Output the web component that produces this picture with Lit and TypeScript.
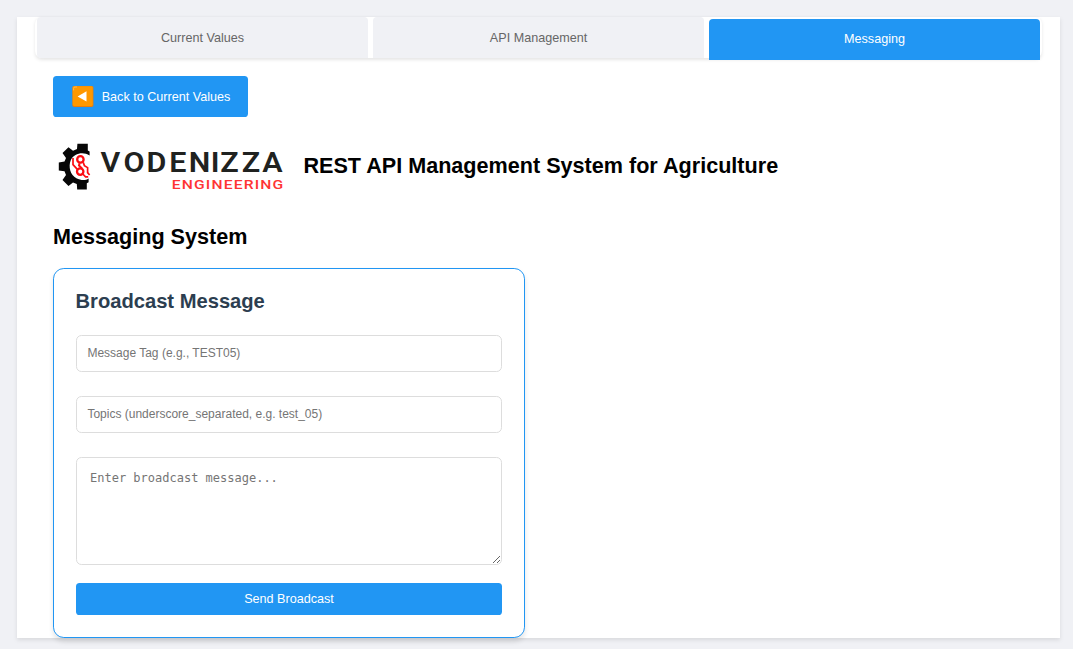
import { LitElement, html, css } from "lit";
import { customElement, state } from "lit/decorators.js";

@customElement("vodenizza-logo")
class VodenizzaLogo extends LitElement {
  static styles = css`
    :host { display: block; width: 234px; height: 62px; }
    svg { display: block; }
    .name { font: 600 28.2px Roboto, "Liberation Sans", sans-serif; text-anchor: middle; fill: #202220; }
    .sub { font: 500 13.7px Roboto, "Liberation Sans", sans-serif; letter-spacing: 1px; fill: #ff3434; }
  `;
  render() {
    return html`<svg width="234" height="62" viewBox="53 135 234 62">
      <path fill="#070707" d="M77.4 143.8 H87.8 V150.6 L89.6 151.6 V155.4 C83 151.2 74 153.4 70.8 160 C68 167 70.4 175 76.4 178.2 C81 180.6 86 180.4 88.6 178.4 V182.2 L86.8 183.3 V189.4 H77.2 L76.8 184 L73 182.5 L68.5 186 L62.5 180 L66 175 L64.5 171.2 L58.8 170.5 V162.5 L64.5 161.5 L66 158 L62.5 153 L68.5 147.3 L73 150.7 L77 149 Z"/>
      <g fill="none" stroke="#fb0d12" stroke-width="1.7">
        <path d="M73 158 V164.6 L77.4 169.4"/>
        <path d="M83.2 162.2 L84.4 165.6 L87.6 167.6 V172.6 L89.6 175"/>
        <path d="M82.8 174 L85.6 176.8 H88.2"/>
        <path d="M79.6 163.3 L79 165.4 L82 168.5" stroke-width="2"/>
        <circle cx="80.4" cy="159.4" r="3.2" stroke-width="2.3"/>
        <circle cx="80.2" cy="171.6" r="3.2" stroke-width="2.3"/>
      </g>
      <text class="name" transform="scale(1.08 1)" y="172.4" x="102.3 124.1 144.9 164.6 184.7 199.1 212.5 232.4 252.3">VODENIZZA</text>
      <text class="sub" x="171.8" y="189" textLength="112.5" lengthAdjust="spacingAndGlyphs">ENGINEERING</text>
    </svg>`;
  }
}

@customElement("app-root")
class AppRoot extends LitElement {
  @state() private active = 2;
  private tabs = ["Current Values", "API Management", "Messaging"];

  static styles = css`
    :host {
      display: block;
      box-sizing: border-box;
      min-height: 100vh;
      padding: 17px 13px 11px 17px;
      background: #f0f1f5;
      font-family: "Liberation Sans", Arial, sans-serif;
      color: #000;
    }
    * { box-sizing: border-box; }
    .container {
      height: 621px;
      padding: 0 18px;
      background: #fff;
      box-shadow: 0 1.8px 4.5px rgba(0, 0, 0, 0.1);
    }
    .tabs {
      display: flex;
      gap: 5px;
      padding: 0 2px;
      height: 41px;
      border-radius: 7px;
      box-shadow: 0 1.8px 3.6px rgba(0, 0, 0, 0.1);
    }
    button { border: 0; font: 12.6px "Liberation Sans", Arial, sans-serif; }
    .tab {
      flex: 1;
      padding: 0;
      border-radius: 4px 4px 0 0;
      background: #f0f1f5;
      color: #666;
    }
    .tab:first-child { border-bottom-left-radius: 4px; }
    .tab.active { padding-bottom: 2px; background: #2196f3; color: #fff; transform: translateY(2px); }
    .page { padding: 18px 18px 0; }
    .back {
      display: flex;
      align-items: center;
      gap: 7.7px;
      width: 195px;
      height: 41px;
      padding: 0 0 0 19px;
      border-radius: 3.6px;
      background: #2196f3;
      color: #fff;
    }
    .back svg { margin-top: -1px; }
    .brand { display: flex; align-items: center; gap: 16.4px; margin-top: 18px; height: 62px; }
    h1, h2 { margin: 0; font-size: 21.6px; line-height: 26px; }
    h1 { white-space: nowrap; }
    h2 { margin: 27px 0 18px; }
    .card {
      width: 472px;
      height: 370px;
      padding: 19px 22px 22px;
      border: 1px solid #2196f3;
      border-radius: 10.8px;
      background: #fff;
      box-shadow: 0 3.6px 5.4px rgba(0, 0, 0, 0.1);
    }
    h3 { margin: 0 0 21px -0.5px; font-size: 20.16px; line-height: 26px; color: #2c3e50; }
    input, textarea {
      display: block;
      width: 100%;
      border: 1px solid #ddd;
      border-radius: 5.4px;
      background: #fff;
      font-size: 12px;
      outline: 0;
    }
    input {
      height: 37px;
      margin: 0 0 24px;
      padding: 0 10.4px 2px;
      font-family: "Liberation Sans", Arial, sans-serif;
    }
    textarea {
      height: 108px;
      margin: 0 0 18px;
      padding: 13px;
      font-family: "DejaVu Sans Mono", monospace;
      resize: vertical;
    }
    ::placeholder { color: #757575; }
    .send { width: 100%; height: 32px; padding: 0; border-radius: 3.6px; background: #2196f3; color: #fff; }
  `;

  render() {
    return html`<main class="container">
      <nav class="tabs">
        ${this.tabs.map((t, i) => html`<button class="tab ${i === this.active ? "active" : ""}" @click=${() => (this.active = i)}>${t}</button>`)}
      </nav>
      <div class="page">
        <button class="back">
          <svg width="22" height="22" viewBox="0 -0.4 22 22">
            <rect x=".4" y=".5" width="21" height="21" rx="1.6" fill="#e77e0c"/>
            <rect x=".7" y=".8" width="20" height="19.8" rx="1.4" fill="#ff9800"/>
            <path d="M1.6 5 V3 Q1.6 1.6 3 1.6 H5" fill="none" stroke="#ffbd52" stroke-width=".9"/>
            <path d="M5.6 11 L14.5 5.8 V16.2 Z" fill="#fff"/>
          </svg>
          <span>Back to Current Values</span>
        </button>
        <header class="brand">
          <vodenizza-logo></vodenizza-logo>
          <h1>REST API Management System for Agriculture</h1>
        </header>
        <h2>Messaging System</h2>
        <section class="card">
          <h3>Broadcast Message</h3>
          <input placeholder="Message Tag (e.g., TEST05)">
          <input placeholder="Topics (underscore_separated, e.g. test_05)">
          <textarea placeholder="Enter broadcast message..."></textarea>
          <button class="send">Send Broadcast</button>
        </section>
      </div>
    </main>`;
  }
}
